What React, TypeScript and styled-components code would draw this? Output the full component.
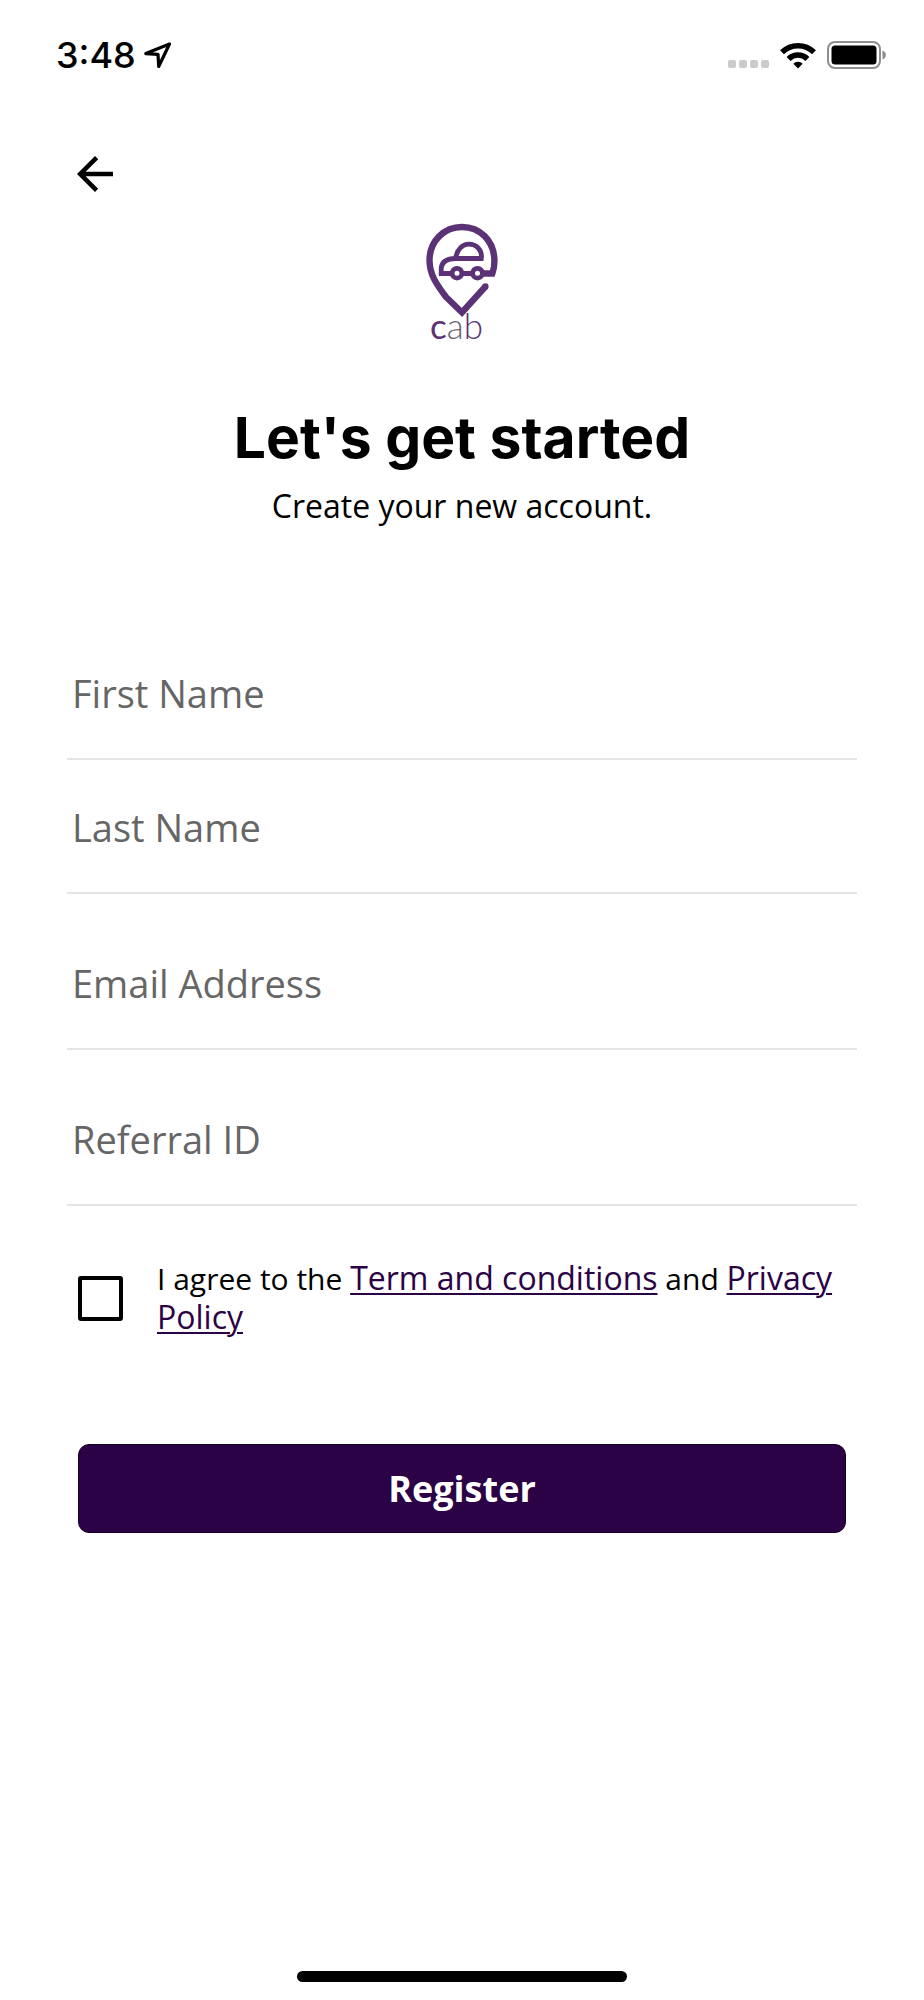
import React, { useState } from "react";
import styled, { createGlobalStyle } from "styled-components";

const ink = "#000000";
const brand = "#2b0245";
const logoPurple = "#5b3275";
const bodyFont = `"Open Sans", "Noto Sans", sans-serif`;
const systemFont = `Inter, "Liberation Sans", sans-serif`;

const GlobalStyle = createGlobalStyle`
  *, *::before, *::after { box-sizing: border-box; }
  body { margin: 0; background: #ffffff; color: ${ink}; font-family: ${bodyFont}; }
`;

const Screen = styled.div`
  min-height: 100vh;
  display: flex;
  flex-direction: column;
`;

const StatusBar = styled.header`
  height: 110px;
  padding: 0 38px 0 56px;
  display: flex;
  align-items: center;
  justify-content: space-between;
`;

const StatusGroup = styled.div<{ $gap: number }>`
  display: flex;
  align-items: center;
  gap: ${({ $gap }) => $gap}px;
`;

const Clock = styled.time`
  font: 500 36px/40px ${systemFont};
`;

const SignalDots = styled.div`
  display: flex;
  align-self: flex-end;
  gap: 3px;
  padding-bottom: 1px;
`;

const Dot = styled.span`
  width: 8px;
  height: 8px;
  border-radius: 2px;
  background: #cbcbcb;
`;

const NavBar = styled.nav`
  padding: 37px 68px 9px;
`;

const BackButton = styled.button`
  display: block;
  width: 54px;
  height: 54px;
  padding: 0;
  border: 0;
  background: none;
  cursor: pointer;
`;

const Main = styled.main`
  flex: 1;
  display: flex;
  flex-direction: column;
`;

const Intro = styled.section`
  display: flex;
  flex-direction: column;
  align-items: center;
  text-align: center;
`;

const Title = styled.h1`
  margin: 53px 0 13px;
  font: 700 57px/70px ${systemFont};
`;

const Subtitle = styled.p`
  margin: 0;
  font-size: 32px;
  line-height: 40px;
`;

const Form = styled.form`
  padding: 102px 67px 0;
  display: flex;
  flex-direction: column;
`;

const FieldGroup = styled.div<{ $gap: number }>`
  display: flex;
  flex-direction: column;
  gap: ${({ $gap }) => $gap}px;
`;

const Field = styled.input`
  width: 100%;
  height: 132px;
  padding: 0 5px;
  border: 0;
  border-bottom: 2px solid #e6e6e6;
  border-radius: 0;
  background: transparent;
  color: ${ink};
  font: 400 38px/48px ${bodyFont};
  outline: none;

  &::placeholder { color: #666666; opacity: 1; }
  &:focus { border-bottom-color: ${brand}; }
`;

const Consent = styled.div`
  margin-top: 53px;
  padding: 0 0 0 11px;
  display: flex;
  align-items: center;
  gap: 34px;
`;

const CheckBox = styled.input`
  appearance: none;
  flex: none;
  width: 45px;
  height: 45px;
  margin: 0;
  border: 4px solid ${ink};
  border-radius: 3px;
  cursor: pointer;

  &:checked { background: ${brand}; box-shadow: inset 0 0 0 5px #ffffff; }
`;

const ConsentLabel = styled.label`
  font-size: 30px;
  line-height: 39px;
`;

const TextLink = styled.a`
  color: ${brand};
  font-size: 32px;
  line-height: 38px;
  text-decoration: underline;
  text-decoration-thickness: 2px;
  text-underline-offset: 3px;
`;

const SubmitButton = styled.button`
  height: 89px;
  margin: 107px 11px 0;
  border: 1px solid #170028;
  border-radius: 11px;
  background: ${brand};
  color: #ffffff;
  font: 700 36px/48px ${bodyFont};
  cursor: pointer;
`;

const HomeArea = styled.footer`
  padding: 24px 0 18px;
  display: flex;
  justify-content: center;
`;

const HomeIndicator = styled.div`
  width: 330px;
  height: 11px;
  border-radius: 6px;
  background: ${ink};
`;

const LocationIcon = () => (
  <svg width="31" height="30" viewBox="0 0 31 30" aria-hidden="true">
    <path d="M27.5 4 3.8 13.6l12.2.8.7 12.1Z" fill="none" stroke={ink} strokeWidth="3.2" strokeLinejoin="round" />
  </svg>
);

const WifiIcon = () => (
  <svg width="36" height="28" viewBox="0 0 36 28" aria-hidden="true">
    <g fill="none" stroke={ink} strokeWidth="5.6">
      <path d="M2 11.3a22.8 22.8 0 0 1 32 0" />
      <path d="M8.6 17.9a13.4 13.4 0 0 1 18.8 0" />
    </g>
    <path d="M18 27.5l-4.7-4.7a6.6 6.6 0 0 1 9.4 0Z" fill={ink} />
  </svg>
);

const BatteryIcon = () => (
  <svg width="59" height="28" viewBox="0 0 59 28" aria-hidden="true">
    <rect x="1" y="1" width="52" height="26" rx="7" fill="none" stroke="#8e8e8e" strokeWidth="2" />
    <rect x="4.5" y="4.5" width="45" height="19" rx="3.5" fill={ink} />
    <path d="M55.5 9.5c4.6 1.6 4.6 7.4 0 9Z" fill="#8e8e8e" />
  </svg>
);

const BackIcon = () => (
  <svg width="54" height="54" viewBox="0 0 24 24" aria-hidden="true">
    <path d="M20 11H7.83l5.59-5.59L12 4l-8 8 8 8 1.41-1.41L7.83 13H20v-2z" fill={ink} />
  </svg>
);

const CabLogo = () => (
  <svg width="130" height="140" viewBox="-3 0 130 140" role="img" aria-label="cab">
    <path
      d="M82 63.5H92.3C94 59 94.6 54.500 94.4 49.6C93.7 30.5 80 17 62 17S29.8 31 29.5 50C29.5 65 37 75 46 87L62 102.5L85.5 76.5"
      fill="none"
      stroke={logoPurple}
      strokeWidth="6.4"
    />
    <circle cx="85.4" cy="76.5" r="3.2" fill={logoPurple} />
    <g fill="none" stroke={logoPurple} strokeWidth="4.8">
      <path d="M52 63.5H41.2V58C42 52 46 48.5 55.5 48.5C57 39.5 62.5 34.2 68.5 34.2C77 34.2 82.5 40.5 81.3 48.5H55M62 63.5H72" />
      <circle cx="57" cy="63.2" r="4.9" />
      <circle cx="77.5" cy="63.2" r="4.9" />
    </g>
    <text x="30" y="129" fontFamily="Lato, sans-serif" fontSize="35">
      <tspan fill={logoPurple} fontWeight="400">c</tspan>
      <tspan fill="#6b6470" fontWeight="300">a</tspan>
      <tspan fill={logoPurple} fontWeight="300">b</tspan>
    </text>
  </svg>
);

export default function App() {
  const [agreed, setAgreed] = useState(false);

  return (
    <Screen>
      <GlobalStyle />
      <StatusBar>
        <StatusGroup $gap={6}>
          <Clock>3:48</Clock>
          <LocationIcon />
        </StatusGroup>
        <StatusGroup $gap={11}>
          <SignalDots>
            <Dot />
            <Dot />
            <Dot />
            <Dot />
          </SignalDots>
          <WifiIcon />
          <BatteryIcon />
        </StatusGroup>
      </StatusBar>

      <NavBar>
        <BackButton type="button" aria-label="Back">
          <BackIcon />
        </BackButton>
      </NavBar>

      <Main>
        <Intro>
          <CabLogo />
          <Title>Let's get started</Title>
          <Subtitle>Create your new account.</Subtitle>
        </Intro>

        <Form onSubmit={(event) => event.preventDefault()}>
          <FieldGroup $gap={24}>
            <FieldGroup $gap={2}>
              <Field type="text" placeholder="First Name" aria-label="First Name" />
              <Field type="text" placeholder="Last Name" aria-label="Last Name" />
            </FieldGroup>
            <Field type="email" placeholder="Email Address" aria-label="Email Address" />
            <Field type="text" placeholder="Referral ID" aria-label="Referral ID" />
          </FieldGroup>

          <Consent>
            <CheckBox
              id="agree"
              type="checkbox"
              checked={agreed}
              onChange={(event) => setAgreed(event.target.checked)}
            />
            <ConsentLabel htmlFor="agree">
              I agree to the <TextLink href="#terms">Term and conditions</TextLink> and{" "}
              <TextLink href="#privacy">Privacy Policy</TextLink>
            </ConsentLabel>
          </Consent>

          <SubmitButton type="submit">Register</SubmitButton>
        </Form>
      </Main>

      <HomeArea>
        <HomeIndicator />
      </HomeArea>
    </Screen>
  );
}
